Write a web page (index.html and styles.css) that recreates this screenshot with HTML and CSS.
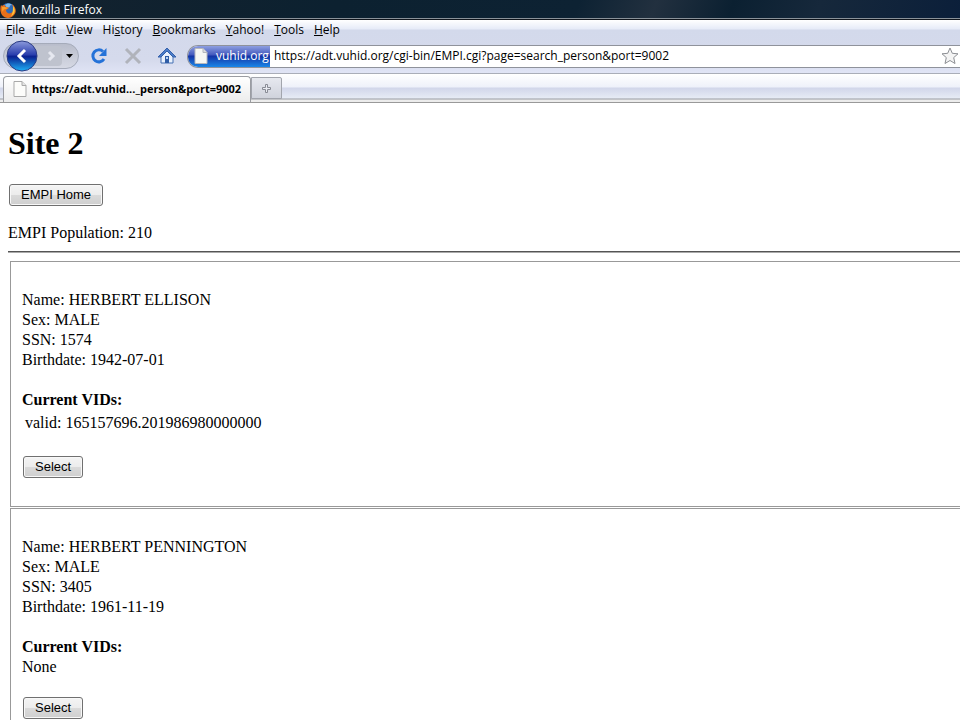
FILE: index.html
```html
<!DOCTYPE html>
<html lang="en">
<head>
    <meta charset="UTF-8">
    <meta name="viewport" content="width=device-width, initial-scale=1.0">
    <title>Mozilla Firefox</title>
    <link rel="stylesheet" href="styles.css">
</head>
<body>
    <div class="titlebar">
        <svg class="fox" viewBox="0 0 16 16" aria-hidden="true">
            <circle cx="8" cy="8" r="7" fill="#2d69b5"/>
            <path d="M5 3c2-2 5-2 7 0-2 0-3 1-2 2l-3 1z" fill="#7db9e8"/>
            <path d="M1 3l1 1c1-1 2-1 3-1 0 1 0 2 2 2l2 1-3 2c0 3 3 4 5 3 2-1 3-3 2-6l-1-3c4 3 5 8 2 11-3 4-9 4-12 0C0 10 0 6 1 3z" fill="#e8701a"/>
            <path d="M13 4c3 4 2 8-2 10 2-3 2-6 2-10z" fill="#ffc83a"/>
            <path d="M2 5c0 2 0 4 1 5 0-2 1-3 3-3l2-1-3-1z" fill="#f9a12e"/>
        </svg>
        <span>Mozilla Firefox</span>
    </div>

    <div class="chrome">
        <nav class="menubar">
            <a href="#"><u>F</u>ile</a>
            <a href="#"><u>E</u>dit</a>
            <a href="#"><u>V</u>iew</a>
            <a href="#">Hi<u>s</u>tory</a>
            <a href="#"><u>B</u>ookmarks</a>
            <a href="#"><u>Y</u>ahoo!</a>
            <a href="#"><u>T</u>ools</a>
            <a href="#"><u>H</u>elp</a>
        </nav>
        <div class="toolbar">
            <div class="history">
                <button class="back" aria-label="Back">
                    <svg width="32" height="32" viewBox="0 0 32 32">
                        <defs>
                            <linearGradient id="orb" x1="0" y1="0" x2="0" y2="1">
                                <stop offset="0" stop-color="#8d9bdc"/>
                                <stop offset=".45" stop-color="#2b3fae"/>
                                <stop offset=".52" stop-color="#0a2191"/>
                                <stop offset="1" stop-color="#1fb0f5"/>
                            </linearGradient>
                        </defs>
                        <circle cx="16" cy="16" r="15" fill="url(#orb)" stroke="#2b3c84"/>
                        <path d="M19 10l-6 6 6 6" fill="none" stroke="#fff" stroke-width="3"/>
                    </svg>
                </button>
                <button class="forward" aria-label="Forward">
                    <svg width="30" height="20" viewBox="0 0 30 20">
                        <path d="M17 6l4 4-4 4" fill="none" stroke="#e6e8f0" stroke-width="3"/>
                    </svg>
                </button>
                <button class="recent" aria-label="Recent pages">
                    <svg width="8" height="4" viewBox="0 0 8 4"><path d="M0 0h7L3.500 4z" fill="#000"/></svg>
                </button>
            </div>
            <div class="tools">
                <button aria-label="Reload">
                    <svg width="18" height="18" viewBox="0 0 18 18">
                        <path d="M13 4.500A6 6 0 1 0 14 12" fill="none" stroke="#2472d8" stroke-width="3"/>
                        <path d="M16.500 1v8H9z" fill="#2472d8"/>
                    </svg>
                </button>
                <button aria-label="Stop">
                    <svg width="18" height="18" viewBox="0 0 18 18">
                        <path d="M2 2l14 14M16 2L2 16" stroke="#b0b3bb" stroke-width="3"/>
                    </svg>
                </button>
                <button aria-label="Home">
                    <svg width="18" height="18" viewBox="0 0 18 18">
                        <path d="M3 9l6-6 6 6v7H3z" fill="#e9f1fc" stroke="#4470b4"/>
                        <path d="M9 1L0 10h3l6-6 6 6h3z" fill="#4a7cc8" stroke="#3561ab"/>
                        <path d="M7 9h4v7H7z" fill="#2f5da6"/>
                        <path d="M8 10h2v2H8z" fill="#b9d2f2"/>
                    </svg>
                </button>
            </div>
            <div class="location">
                <div class="identity">
                    <svg width="14" height="16" viewBox="0 0 14 16">
                        <path d="M1 .5h8l4 4v11H1z" fill="#f7f7f3" stroke="#b5b7bd"/>
                        <path d="M9 .5v4h4" fill="#ddd" stroke="#b5b7bd"/>
                    </svg>
                    <span>vuhid.org</span>
                </div>
                <input class="url" type="text" aria-label="Address" value="https://adt.vuhid.org/cgi-bin/EMPI.cgi?page=search_person&amp;port=9002">
                <button class="star" aria-label="Bookmark this page">
                    <svg width="18" height="18" viewBox="0 0 18 18">
                        <path d="M9 1l2.300 5.300 5.700.5-4.300 3.800 1.300 5.900L9 13.500 4 16.500l1.300-5.900L1 6.800l5.700-.5z" fill="#f4f4f4" stroke="#8d8f94" stroke-linejoin="round"/>
                    </svg>
                </button>
            </div>
        </div>
    </div>

    <div class="tabs">
        <button class="tab">
            <svg width="14" height="16" viewBox="0 0 14 16">
                <path d="M1 .5h8l4 4v11H1z" fill="#fcfcfa" stroke="#a9a9a9"/>
                <path d="M9 .5v4h4" fill="#e4e4e4" stroke="#a9a9a9"/>
            </svg>
            <span>https://adt.vuhid..._person&amp;port=9002</span>
        </button>
        <button class="new-tab" aria-label="New tab">
            <svg width="9" height="9" viewBox="0 0 9 9">
                <path d="M3.500 .5h2v3h3v2h-3v3h-2v-3h-3v-2h3z" fill="#e9ebf2" stroke="#888b94"/>
            </svg>
        </button>
    </div>

    <main class="page">
        <h1>Site 2</h1>
        <button class="btn">EMPI Home</button>
        <p class="population">EMPI Population: 210</p>
        <hr>
        <div class="results">
            <section class="person">
                <p>Name: HERBERT ELLISON</p>
                <p>Sex: MALE</p>
                <p>SSN: 1574</p>
                <p>Birthdate: 1942-07-01</p>
                <h2>Current VIDs:</h2>
                <p class="vid">valid: 165157696.201986980000000</p>
                <button class="btn select">Select</button>
            </section>
            <section class="person">
                <p>Name: HERBERT PENNINGTON</p>
                <p>Sex: MALE</p>
                <p>SSN: 3405</p>
                <p>Birthdate: 1961-11-19</p>
                <h2>Current VIDs:</h2>
                <p>None</p>
                <button class="btn select">Select</button>
            </section>
        </div>
    </main>
</body>
</html>
```
FILE: styles.css
```css
* { box-sizing: border-box; margin: 0; padding: 0; }
body { display: flex; flex-direction: column; height: 100vh; overflow: hidden; background: #fff; color: #000; font: 12px/16px "Open Sans", "Noto Sans", sans-serif; }
button { font: inherit; color: inherit; border: none; background: none; }
svg { display: block; flex: none; }

/* window title */
.titlebar { display: flex; align-items: center; gap: 5px; height: 19px; flex: none; padding-top: 2px; color: #fff;
    background: linear-gradient(110deg, #14222e 0%, #0c2130 35%, #0d2233 60%, #22303f 68%, #0b2031 76%, #16283b 85%, #0b1f3a 100%);
    border-bottom: 1px solid #8a9299; }
.fox { width: 16px; height: 16px; }

/* menu and navigation */
.chrome { flex: none; height: 55px; border-top: 1px solid #10151c; border-bottom: 1px solid #a9adb8; background: linear-gradient(#fff, #e6ebf8 9px, #d3d9eb 10px, #d5daec 40px, #e0e4f5); }
.menubar { display: flex; gap: 10px; height: 20px; padding: 2px 6px; }
.menubar a { color: #000; text-decoration: none; }
.toolbar { display: flex; align-items: center; height: 32px; padding-left: 3px; }
.history { display: flex; align-items: center; height: 26px; padding-left: 2px; border: 1px solid #a5abba; border-radius: 13px; background: linear-gradient(#b9bdcb, #d6d9e4); }
.back { z-index: 1; }
.forward { margin-left: -6px; background: #bfc3ce; border-radius: 0 4px 4px 0; }
.recent { padding: 4px; }
.tools { display: flex; gap: 16px; padding: 0 11px; }
.location { display: flex; flex: 1; height: 23px; border: 1px solid #8f929b; border-right: none; border-radius: 11px 0 0 11px; background: #fff; overflow: hidden; }
.identity { display: flex; align-items: center; gap: 8px; padding: 0 1px 0 6px; color: #fff; background: linear-gradient(#8e9fe0, #4258bd 9px, #1433a4 10px, #1a86e8); }
.url { flex: 1; min-width: 0; padding: 0 4px; border: none; font: inherit; background: none; }
.star { padding: 0 1px; }

/* tab strip */
.tabs { display: flex; flex: none; align-items: flex-end; height: 29px; padding-left: 3px; border-bottom: 1px solid #999; background: linear-gradient(#fff, #eef1fa 13px, #d1d6ea 14px, #e6ebf5 24px, #999ca3 25px, #ececec 26px); }
.tab { display: flex; align-items: center; gap: 5px; height: 26px; padding: 0 9px 2px 9px; font-size: 11px; font-weight: bold; border: 1px solid #9a9ca2; border-bottom: none; border-radius: 4px 4px 0 0; background: linear-gradient(#fff, #ececec); }
.new-tab { display: flex; align-items: center; justify-content: center; width: 31px; height: 22px; margin-bottom: 3px; border: 1px solid #a2a5ad; border-radius: 0 2px 0 0; background: linear-gradient(#e6e8ef, #d0d3dc); }

/* page */
.page { flex: 1; min-height: 0; overflow: hidden; padding: 20px 0 0 8px; font: 16px/20px "Liberation Serif", "Times New Roman", serif; }
h1 { font-size: 32px; line-height: 40px; margin-bottom: 21px; }
h2 { font-size: 16px; margin-top: 20px; }
.btn { display: block; height: 22px; margin-left: 1px; padding: 0 11px; font: 13px/20px "Liberation Sans", Arial, sans-serif; border: 1px solid #707070; border-radius: 3px; background: linear-gradient(#f4f4f4, #ececec 50%, #dadada 50%, #cfcfcf); box-shadow: inset 0 0 0 1px #f8f8f8; }
.population { margin-top: 17px; }
hr { margin: 8px 0; height: 2px; border: none; border-top: 1px solid #555; border-bottom: 1px solid #aaa; }
.results { display: flex; flex-direction: column; gap: 1px; margin-left: 2px; }
.person { padding: 28px 11px; border: 1px solid #999; border-right: none; }
.vid { padding: 3px; }
.select { margin-top: 20px; }
```
